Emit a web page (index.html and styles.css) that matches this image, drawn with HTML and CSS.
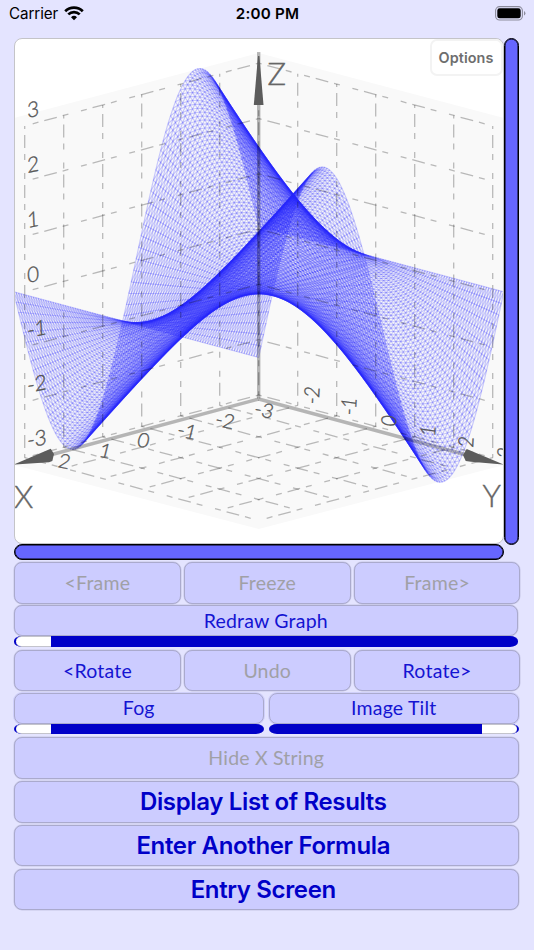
FILE: index.html
```
<!doctype html>
<html>
<head>
<meta charset="UTF-8">
<title>Graph</title>
<meta name="viewport" content="width=device-width, initial-scale=1.0">
<link rel="stylesheet" href="styles.css">
</head>

<body>
<div class="status">
	<div class="carrier">
		<span>Carrier</span>
		<svg width="20" height="15" viewBox="0 0 20 15">
			<path d="M1.2 5.2a12.6 12.6 0 0 1 17.6 0M4.3 8.4a8.1 8.1 0 0 1 11.4 0" fill="none" stroke="#000" stroke-width="2.7"/>
			<path d="M10 14.2l-3-3a4.3 4.3 0 0 1 6 0z"/>
		</svg>
	</div>
	<div class="time">2:00 PM</div>
	<svg class="battery" width="31" height="15" viewBox="0 0 31 15">
		<rect x=".6" y=".6" width="26.8" height="13.4" rx="4" fill="none" stroke="#8b8b9b" stroke-width="1.1"/>
		<rect x="2.3" y="2.3" width="23.4" height="10" rx="2.4"/>
		<path d="M29 5v4.6q1.4-.7 1.4-2.3T29 5z" fill="#8b8b9b"/>
	</svg>
</div>

<div class="graph-row">
	<div class="graph">
		<svg id="plot" width="489" height="505" viewBox="14 39 489 505"></svg>
		<button class="options">Options</button>
	</div>
	<div class="slider slider-v"></div>
</div>
<div class="slider slider-h"></div>

<div class="controls">
	<div class="row thirds">
		<button disabled>&lt;Frame</button>
		<button disabled>Freeze</button>
		<button disabled>Frame&gt;</button>
	</div>
	<div class="group redraw">
		<button>Redraw Graph</button>
		<div class="track"><span class="knob left"></span></div>
	</div>
	<div class="row thirds rotate">
		<button>&lt;Rotate</button>
		<button disabled>Undo</button>
		<button>Rotate&gt;</button>
	</div>
	<div class="row halves">
		<div class="group">
			<button>Fog</button>
			<div class="track"><span class="knob left"></span></div>
		</div>
		<div class="group">
			<button>Image Tilt</button>
			<div class="track"><span class="knob right"></span></div>
		</div>
	</div>
	<button class="wide" disabled>Hide X String</button>
	<button class="wide strong">Display List of Results</button>
	<button class="wide strong">Enter Another Formula</button>
	<button class="wide strong">Entry Screen</button>
</div>

<script src="plot.js"></script>
</body>
</html>
```
FILE: styles.css
```
* {
	box-sizing: border-box;
}

body {
	margin: 0;
	height: 950px;
	background: #e4e4ff;
	font-family: Lato, "Liberation Sans", sans-serif;
	overflow: hidden;
}

.status {
	display: grid;
	grid-template-columns: 1fr auto 1fr;
	align-items: center;
	height: 27px;
	margin-bottom: 11px;
	padding: 0 8px 0 9px;
	font: 15.2px Inter, sans-serif;
}

.carrier {
	display: flex;
	align-items: center;
	gap: 6px;
	letter-spacing: -.1px;
}

.time {
	font-weight: 600;
	letter-spacing: .2px;
}

.battery {
	justify-self: end;
}

/* graph and its two scroll sliders */
.graph-row {
	display: flex;
	height: 506px;
	padding-left: 13.5px;
}

.graph {
	position: relative;
	width: 490px;
	border: 1px solid #c4c4c8;
	border-radius: 8px;
	background: #fff;
	overflow: hidden;
}

#plot {
	display: block;
	margin: -.5px 0 0 -.5px;
}

.options {
	position: absolute;
	top: 0;
	right: 0;
	width: 73px;
	height: 37px;
	padding: 0;
	border: 2px solid #f3f3f3;
	border-radius: 7px;
	background: #fff;
	color: #6e6e6e;
	font: 600 14.4px Inter, sans-serif;
	letter-spacing: .1px;
}

.slider {
	border: 1px solid #000;
	border-radius: 8px;
	background: #66f;
	box-shadow: inset 0 0 0 .5px #000;
}

.slider-v {
	width: 15.5px;
	height: 507px;
}

.slider-h {
	width: 490.5px;
	height: 16px;
	margin-left: 13.5px;
}

/* buttons */
.controls {
	margin-top: 2px;
	padding-left: 13.5px;
}

.controls button {
	display: block;
	width: 100%;
	padding: 0;
	border: 1px solid #aaaacd;
	border-radius: 8px;
	background: #ccf;
	box-shadow: 0 0 0 .5px #aaaacd80;
	color: #1414d2;
	font: 19.5px/1 Lato, sans-serif;
	letter-spacing: .2px;
}

.controls button:disabled {
	color: #a0a0a6;
}

.row {
	display: flex;
}

.thirds {
	gap: 3px;
	width: 506.5px;
	height: 41.5px;
	margin-left: .5px;
}

.redraw {
	width: 504.5px;
	margin-top: 1.5px;
}

.rotate {
	margin-top: 3.2px;
}

.halves {
	gap: 4.5px;
	width: 505.5px;
	margin-top: 1.5px;
}

.halves .group {
	flex: 1;
}

.group button {
	height: 31px;
}

.halves .group button {
	box-shadow: 0 0 0 1px #d0d0fa;
}

.track {
	display: flex;
	height: 10.5px;
	border-radius: 8px / 5px;
	background: #0000c8;
	overflow: hidden;
}

.knob {
	width: 35px;
	border: solid #c4c4cc;
	border-width: 1px 0;
	background: #fff;
}

.knob.left {
	margin-left: 2px;
	border-radius: 6px 0 0 6px;
}

.knob.right {
	margin: 0 2px 0 auto;
	border-radius: 0 6px 6px 0;
}

.controls .wide {
	width: 505.5px;
	height: 41.4px;
	margin-top: 2.3px;
}

.controls .halves + .wide {
	margin-top: 3.3px;
}

.controls .strong {
	padding: 1px 6px 0 0;
	color: #0000c8;
	font: 600 24px/1 Inter, sans-serif;
	letter-spacing: -.35px;
}

/* plot */
.plane {
	fill: #f9f9f9;
}

.mesh {
	fill: none;
	stroke: #2828ff;
	stroke-opacity: .24;
	stroke-width: 1.15;
}

.grid {
	fill: none;
	stroke: #000;
	stroke-opacity: .26;
	stroke-width: 1.3;
	stroke-dasharray: 13 6 6 13 6 6;
	stroke-dashoffset: 41;
}

.axis {
	stroke: #000;
	stroke-opacity: .27;
	stroke-width: 3.4;
}

.arrow {
	fill: #5c5c5c;
}

.tick {
	fill: #555;
	stroke: #555;
	stroke-width: .35;
	font: 300 20.5px Lato, sans-serif;
}

.name {
	fill: #666;
	stroke: #666;
	stroke-width: .4;
	font: 300 31px Lato, sans-serif;
}
```
FILE: plot.js
```
var plot = document.getElementById("plot");
var PI = Math.PI;
var STEPS = 100;

function add(tag, attrs, text) {
	var el = document.createElementNS("http://www.w3.org/2000/svg", tag);
	for (var k in attrs) el.setAttribute(k, attrs[k]);
	if (text !== undefined) el.textContent = text;
	plot.appendChild(el);
}

function project(x, y, z) {
	return (258.7 + 39 * (y - x)).toFixed(2) + " " + (291.8 + 10.45 * (x + y) - 55.3 * z).toFixed(2);
}

function line(cls, points) {
	add("path", {"class": cls, d: "M" + points.join("L")});
}

function f(x, y) {
	return y * Math.sin(x);
}

function node(i, j) {
	var x = -PI + 2 * PI * i / STEPS;
	var y = -PI + 2 * PI * j / STEPS;
	return project(x, y, f(x, y));
}

// back walls and floor
line("plane", ["258.7 53", "14 118", "14 465", "258.7 529", "503.5 465", "503.5 118"]);

// surface
for (var i = 0; i <= STEPS; i++) {
	var curve = [];
	for (var j = 0; j <= STEPS; j++) curve.push(node(j, i));
	line("mesh", curve);
	line("mesh", [node(i, 0), node(i, STEPS)]);
}

// diagonals of the triangles
for (var d = 1; d < 2 * STEPS; d++) {
	var diag = [];
	for (i = Math.max(0, d - STEPS); i <= Math.min(d, STEPS); i++) diag.push(node(i, d - i));
	line("mesh", diag);
}

// grid
for (var n = -3; n <= 3; n++) {
	line("grid", [project(-3, -3, n), project(3, -3, n)]);
	line("grid", [project(-3, -3, n), project(-3, 3, n)]);
	line("grid", [project(n, -3, 3), project(n, -3, -3)]);
	if (n > -3) {
		line("grid", [project(-3, n, 3), project(-3, n, -3)]);
		line("grid", [project(n, -3, -3), project(n, 3, -3)]);
		line("grid", [project(-3, n, -3), project(3, n, -3)]);
	}
}

// axes
line("axis", ["258.7 398.5", "258.7 52"]);
line("axis", ["258.7 399", "52 454.5"]);
line("axis", ["258.7 399", "465 454.5"]);
line("arrow", ["258 56", "259.4 56", "263.5 105", "253.8 105"]);
line("arrow", ["14 464.5", "50.7 448.7", "54 454", "52.3 461", "49 462.3"]);
line("arrow", ["503.5 464.5", "466.7 449", "463 455", "465.7 461", "471 461.8"]);

function tick(m, x, y, n) {
	add("text", {"class": "tick", transform: "matrix(" + m + "," + x + "," + y + ")"}, n);
}

for (n = -3; n <= 3; n++) {
	tick("1,-.2,.05,1.04", 27.5, 283 - 55 * n, n);
}

[[-3, 253, 415], [-2, 214, 425.5], [-1, 176, 436], [0, 136, 446], [1, 98, 456.5], [2, 57, 467]].forEach(function (t) {
	tick(".97,.2,-.24,.95", t[1], t[2], t[0]);
});

[[-2, 318.5, 405], [-1, 355.5, 416], [0, 396, 427], [1, 435, 437], [2, 473, 448], [3, 512, 459]].forEach(function (t) {
	tick(".05,-.9,1.02,.14", t[1], t[2], t[0]);
});

add("text", {"class": "name", x: 267.5, y: 84.5}, "Z");
add("text", {"class": "name", x: 14, y: 508}, "X");
add("text", {"class": "name", x: 482.5, y: 507}, "Y");
```
